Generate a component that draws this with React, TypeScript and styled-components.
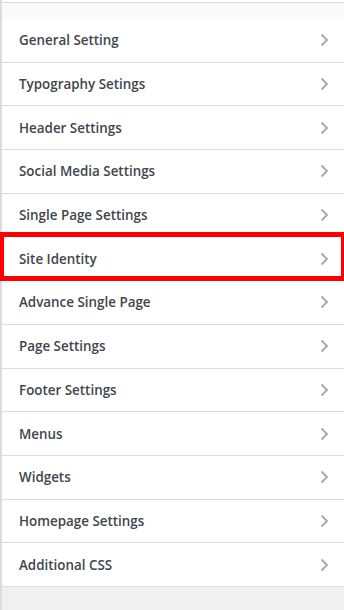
import React from "react";
import styled, { createGlobalStyle } from "styled-components";

const Global = createGlobalStyle`
  html, body { margin: 0; padding: 0; background: #f0f0f0; }
  body { font-family: "Open Sans", "Noto Sans", sans-serif; }
`;

const Panel = styled.div`
  width: 344px;
  height: 610px;
  box-sizing: border-box;
  border-left: 2px solid #dcdcdc;
  background: #f0f0f0;
  display: flex;
  flex-direction: column;
`;

const TopStrip = styled.div`
  height: 2px;
  background: #ffffff;
`;

const Header = styled.div`
  height: 16px;
  border-top: 1px solid #dcdcdc;
  background: #fafafa;
`;

const List = styled.ul`
  list-style: none;
  margin: 0;
  padding: 0;
  background: #ffffff;
`;

const Row = styled.li<{ $highlight?: boolean }>`
  position: relative;
  box-sizing: border-box;
  height: 43.7px;
  display: flex;
  align-items: center;
  justify-content: space-between;
  padding: 0 14px 0 17px;
  border-bottom: 1px solid #dddddd;
  background: #ffffff;
  color: #40464d;
  font-size: 13.4px;
  font-weight: 600;
  cursor: pointer;

  ${(p) =>
    p.$highlight &&
    `
    &::after {
      content: "";
      position: absolute;
      top: -5px;
      bottom: -1px;
      left: -2px;
      right: 0;
      border: 5px solid #ff0000;
      border-left-width: 4px;
      border-right-width: 3px;
      pointer-events: none;
    }
  `}
`;

const Chevron = styled.svg`
  width: 11px;
  height: 14px;
  flex: none;
`;

const items = [
  "General Setting",
  "Typography Setings",
  "Header Settings",
  "Social Media Settings",
  "Single Page Settings",
  "Site Identity",
  "Advance Single Page",
  "Page Settings",
  "Footer Settings",
  "Menus",
  "Widgets",
  "Homepage Settings",
  "Additional CSS",
];

export default function App() {
  return (
    <>
      <Global />
      <Panel>
        <TopStrip />
        <Header />
        <List>
          {items.map((label) => (
            <Row key={label} $highlight={label === "Site Identity"}>
              <span>{label}</span>
              <Chevron viewBox="0 0 11 14">
                <path d="M2.5 1.5 L8 7 L2.5 12.5" fill="none" stroke="#a7aaad" strokeWidth="1.9" />
              </Chevron>
            </Row>
          ))}
        </List>
      </Panel>
    </>
  );
}
